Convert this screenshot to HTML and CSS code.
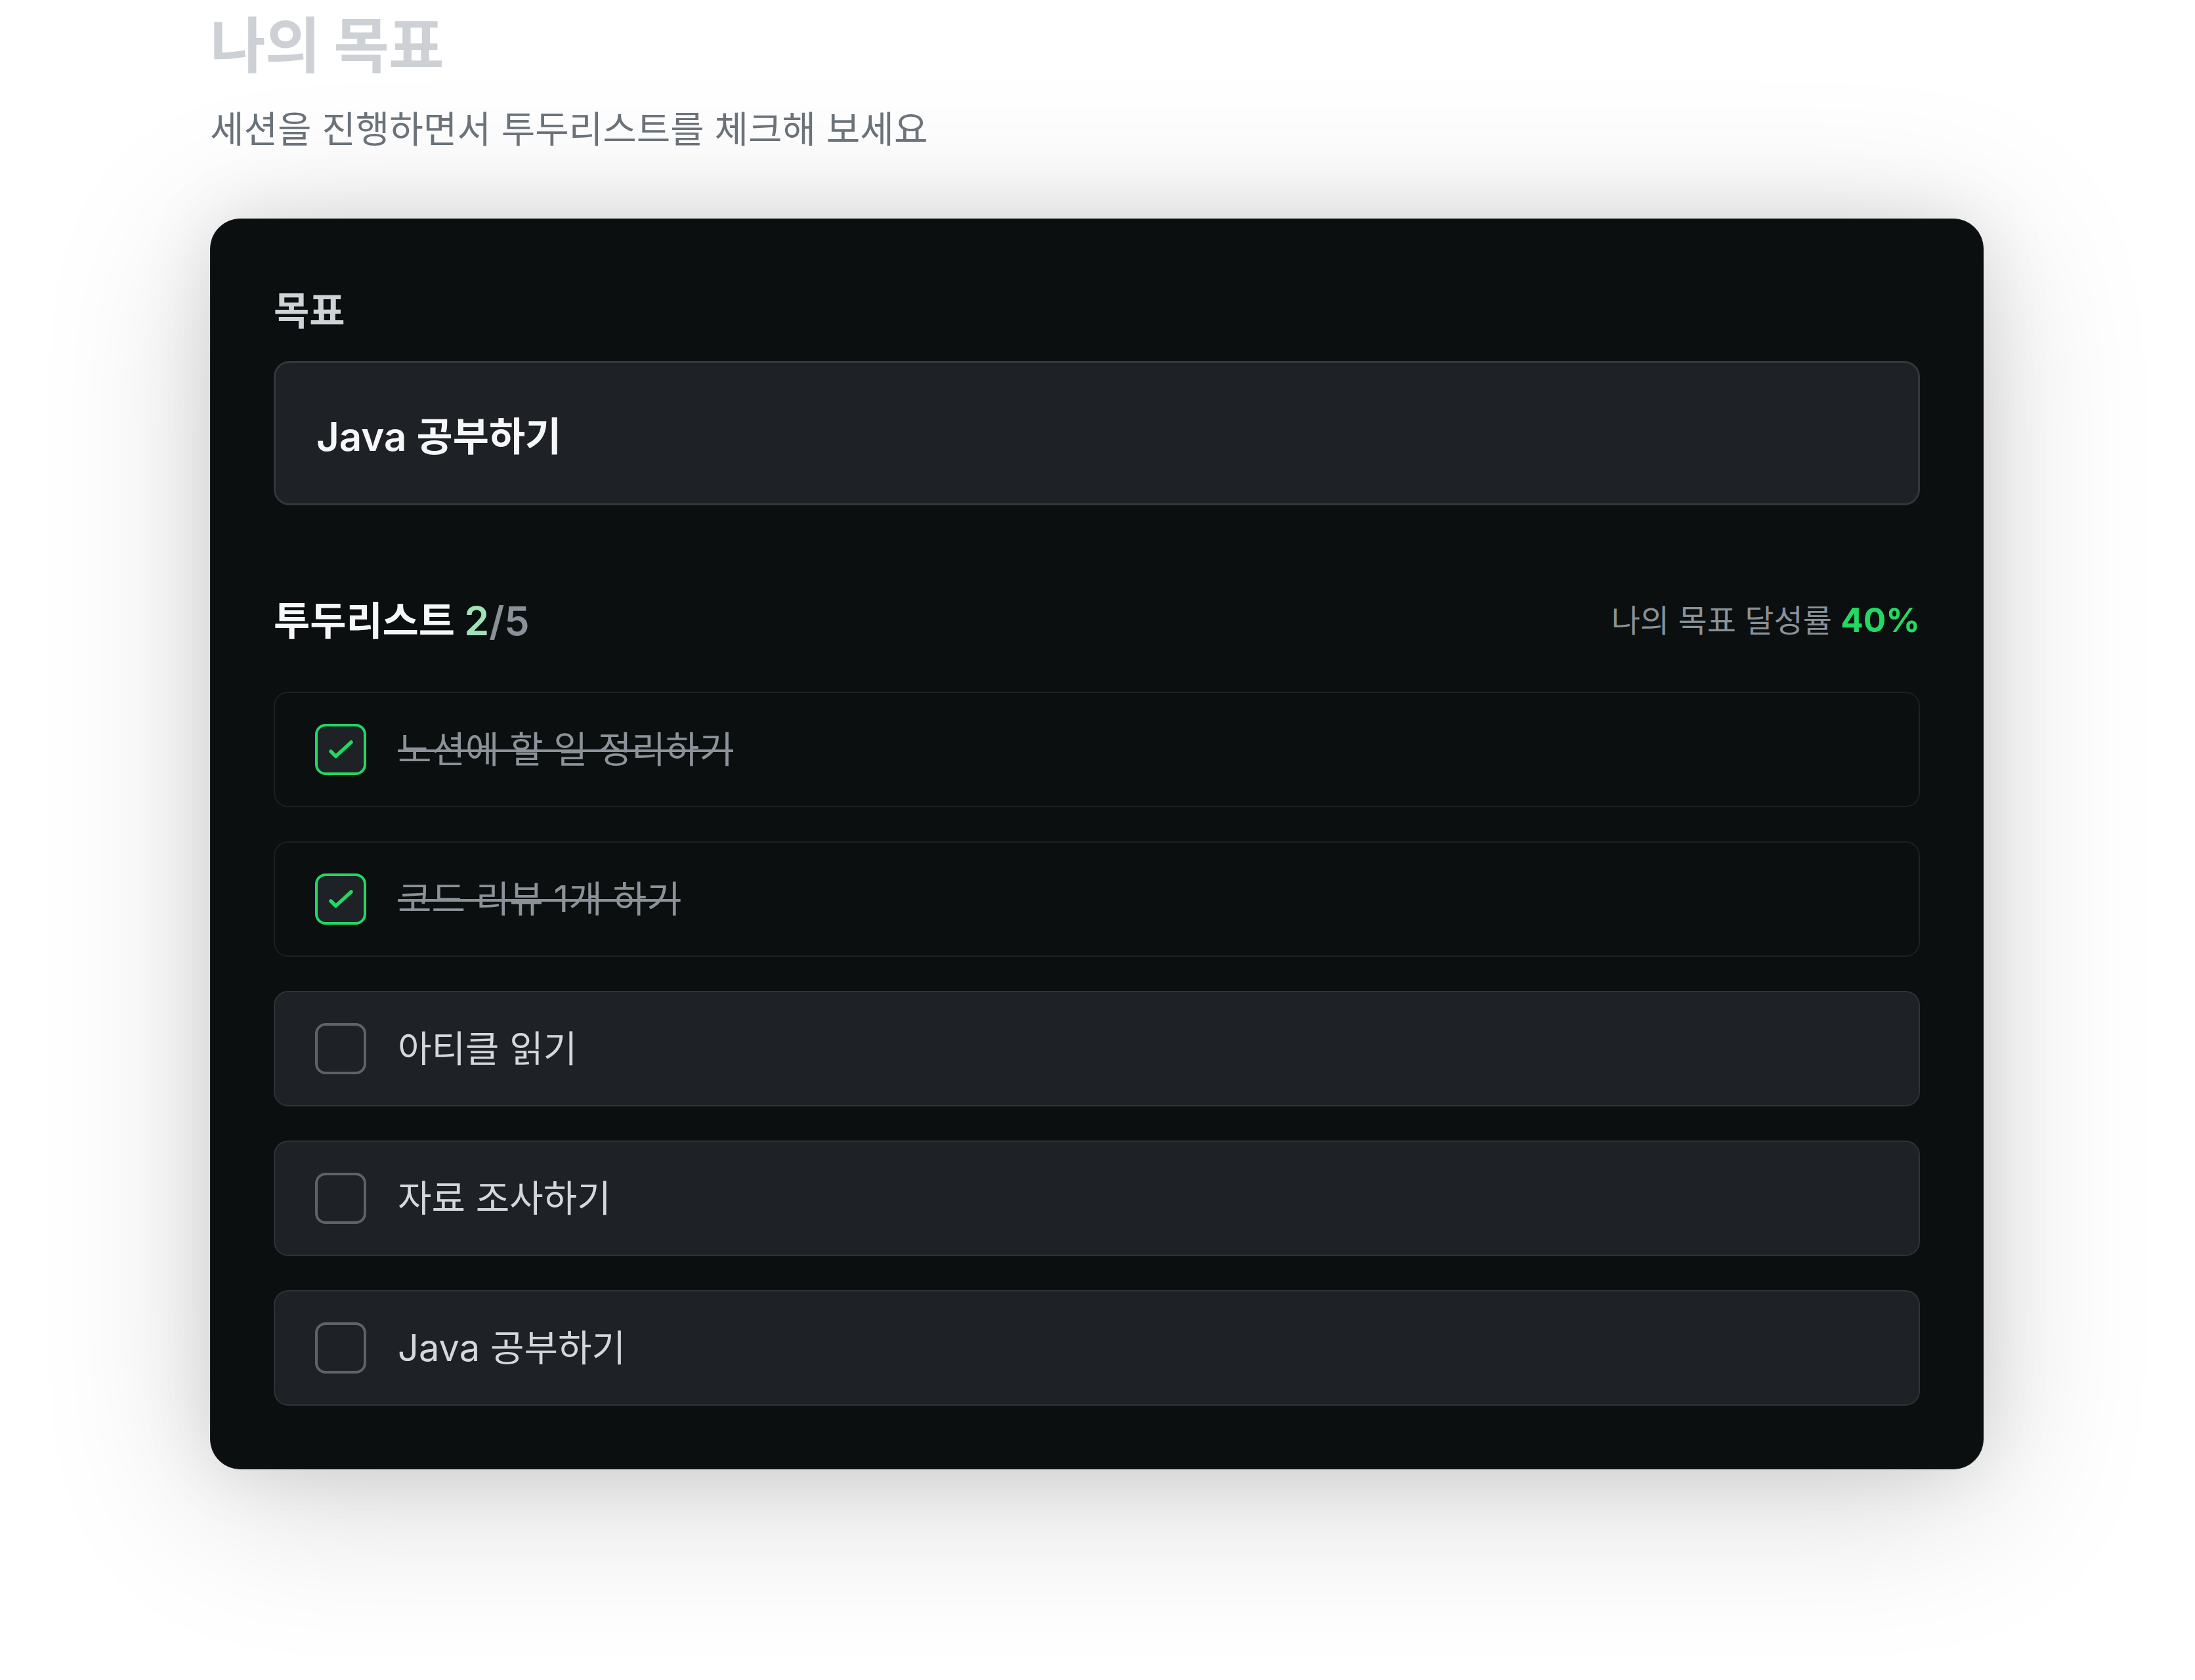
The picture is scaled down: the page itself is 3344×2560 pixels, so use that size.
FILE: index.html
```html
<!DOCTYPE html>
<html lang="ko">
<head>
<meta charset="utf-8">
<title>나의 목표</title>
<link rel="stylesheet" href="styles.css">
</head>
<body>
<main class="page">
  <h1 class="title">나의 목표</h1>
  <p class="subtitle">세션을 진행하면서 투두리스트를 체크해 보세요</p>

  <section class="card">
    <div class="label">목표</div>
    <div class="goal-input">Java 공부하기</div>

    <div class="todo-head">
      <h2 class="todo-title">투두리스트 <span class="count"><span class="done-count">2</span>/5</span></h2>
      <div class="rate"><span class="rate-label">나의 목표 달성률</span> <span class="rate-pct">40%</span></div>
    </div>

    <ul class="todos">
      <li class="todo is-done">
        <span class="check is-checked"><svg viewBox="4 4 70 70" aria-hidden="true"><path d="M24 42 L31.5 49.5 L55 28" /></svg></span>
        <span class="todo-text">노션에 할 일 정리하기</span>
      </li>
      <li class="todo is-done">
        <span class="check is-checked"><svg viewBox="4 4 70 70" aria-hidden="true"><path d="M24 42 L31.5 49.5 L55 28" /></svg></span>
        <span class="todo-text">코드 리뷰 1개 하기</span>
      </li>
      <li class="todo">
        <span class="check"></span>
        <span class="todo-text">아티클 읽기</span>
      </li>
      <li class="todo">
        <span class="check"></span>
        <span class="todo-text">자료 조사하기</span>
      </li>
      <li class="todo">
        <span class="check"></span>
        <span class="todo-text">Java 공부하기</span>
      </li>
    </ul>
  </section>
</main>
</body>
</html>
```

FILE: styles.css
```css
* { box-sizing: border-box; }

html, body {
  margin: 0;
  padding: 0;
  background: #ffffff;
}

body {
  font-family: Inter, "Noto Sans CJK KR", "Noto Sans", sans-serif;
  color: #f5f6f8;
  min-height: 2560px;
}

.page {
  width: 2702px;
  margin-left: 320px;
  padding-top: 10px;
  padding-bottom: 330px;
}

.title {
  margin: 0;
  font-size: 92px;
  line-height: 120px;
  font-weight: 700;
  letter-spacing: -0.01em;
  color: #cdd1d5;
}

.subtitle {
  margin: 28px 0 0;
  font-size: 56px;
  line-height: 78px;
  font-weight: 400;
  color: #6b7279;
}

.card {
  margin-top: 97px;
  background: #0b0f0f;
  border: 1px solid #1c2024;
  border-radius: 46px;
  padding: 96px;
  box-shadow:
    0 0 110px rgba(0, 0, 0, 0.1),
    0 40px 300px rgba(0, 0, 0, 0.17);
}

.label {
  font-size: 59px;
  line-height: 88px;
  font-weight: 600;
  color: #cfd3d7;
}

.goal-input {
  margin-top: 32px;
  height: 220px;
  display: flex;
  align-items: center;
  padding: 0 62px;
  background: #1e2125;
  border: 3px solid #33373c;
  border-radius: 24px;
  font-size: 60px;
  font-weight: 600;
  color: #f6f7f9;
}

.todo-head {
  margin-top: 131px;
  display: flex;
  align-items: center;
  justify-content: space-between;
}

.todo-title {
  margin: 0;
  font-size: 60px;
  line-height: 88px;
  font-weight: 700;
  color: #f6f7f9;
}

.count {
  font-size: 61px;
  font-weight: 600;
  color: #8a9097;
}

.done-count {
  color: #9fe2b8;
}

.rate {
  font-size: 48px;
  line-height: 88px;
  color: #8a9198;
}

.rate-pct {
  font-size: 51px;
  font-weight: 700;
  color: #22d964;
}

.todos {
  list-style: none;
  margin: 64px 0 0;
  padding: 0;
  display: flex;
  flex-direction: column;
  gap: 52px;
}

.todo {
  height: 176px;
  display: flex;
  align-items: center;
  gap: 48px;
  padding: 0 61px;
  background: #1e2125;
  border: 2px solid #2f3338;
  border-radius: 22px;
}

.todo.is-done {
  background: #0b0f0f;
  border-color: #1d2125;
}

.check {
  flex: none;
  width: 78px;
  height: 78px;
  border: 4px solid #5c636a;
  border-radius: 16px;
  background: #1e2125;
}

.check.is-checked {
  border-color: #22d764;
}

.check svg {
  display: block;
  width: 100%;
  height: 100%;
}

.check path {
  fill: none;
  stroke: #22d764;
  stroke-width: 5.5;
  stroke-linecap: round;
  stroke-linejoin: round;
}

.todo-text {
  font-size: 56px;
  line-height: 78px;
  color: #d4d7db;
}

.is-done .todo-text {
  color: #8b9299;
  text-decoration: line-through;
  text-decoration-thickness: 4px;
}
```
